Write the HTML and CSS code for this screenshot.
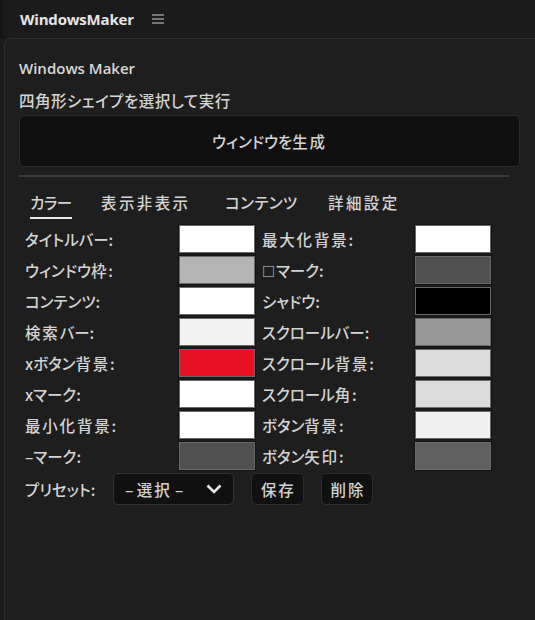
FILE: index.html
```html
<!DOCTYPE html>
<html lang="ja">
<head>
<meta charset="utf-8">
<link rel="stylesheet" href="styles.css">
</head>
<body>
<div class="topbar">
  <span class="app-title">WindowsMaker</span>
  <svg class="menu-icon" width="12" height="10" viewBox="0 0 12 10"><path d="M0 1H12M0 5H12M0 9H12" stroke="#cfcfcf" stroke-width="1.2"/></svg>
</div>
<div class="panel">
  <div class="heading">Windows Maker</div>
  <div class="subtitle">四角形シェイプを選択して実行</div>
  <button class="generate">ウィンドウを<span class="kj">生成</span></button>
  <div class="separator"></div>
  <div class="tabs">
    <span class="tab active">カラー</span>
    <span class="tab kj">表示非表示</span>
    <span class="tab">コンテンツ</span>
    <span class="tab kj">詳細設定</span>
  </div>
  <div class="grid">
    <span class="label">タイトルバー:</span><span class="swatch" style="background:#ffffff"></span>
    <span class="label right"><span class="kj">最大化背景</span>:</span><span class="swatch" style="background:#ffffff"></span>
    <span class="label">ウィンドウ<span class="kj">枠</span>:</span><span class="swatch" style="background:#b4b4b4"></span>
    <span class="label right"><span class="box-mark">□</span>マーク:</span><span class="swatch" style="background:#505050"></span>
    <span class="label">コンテンツ:</span><span class="swatch" style="background:#ffffff"></span>
    <span class="label right">シャドウ:</span><span class="swatch" style="background:#000000"></span>
    <span class="label"><span class="kj">検索</span>バー:</span><span class="swatch" style="background:#f2f2f2"></span>
    <span class="label right">スクロールバー:</span><span class="swatch" style="background:#999999"></span>
    <span class="label">xボタン<span class="kj">背景</span>:</span><span class="swatch" style="background:#e81123"></span>
    <span class="label right">スクロール<span class="kj">背景</span>:</span><span class="swatch" style="background:#dcdcdc"></span>
    <span class="label">xマーク:</span><span class="swatch" style="background:#ffffff"></span>
    <span class="label right">スクロール<span class="kj">角</span>:</span><span class="swatch" style="background:#dcdcdc"></span>
    <span class="label"><span class="kj">最小化背景</span>:</span><span class="swatch" style="background:#ffffff"></span>
    <span class="label right">ボタン<span class="kj">背景</span>:</span><span class="swatch" style="background:#f0f0f0"></span>
    <span class="label">–マーク:</span><span class="swatch" style="background:#505050"></span>
    <span class="label right">ボタン<span class="kj">矢印</span>:</span><span class="swatch" style="background:#606060"></span>
  </div>
  <div class="preset-row">
    <span class="label">プリセット:</span>
    <div class="select">
      <span>– <span class="kj">選択</span> –</span>
      <svg width="16" height="10" viewBox="0 0 16 10"><path d="M1.5 1.5L8 8L14.5 1.5" fill="none" stroke="#e6e6e6" stroke-width="2.6"/></svg>
    </div>
    <button class="small-btn kj">保存</button>
    <button class="small-btn kj">削除</button>
  </div>
</div>
</body>
</html>
```
FILE: styles.css
```css
html, body {
  margin: 0;
  padding: 0;
  height: 100%;
}
body {
  background: #1b1b1b;
  color: #d4d4d4;
  font-family: "Noto Sans CJK JP", "Noto Sans", sans-serif;
  font-size: 15px;
  font-weight: 500;
  font-feature-settings: "palt";
  overflow: hidden;
}
.kj {
  letter-spacing: 1.8px;
}
.topbar {
  height: 38px;
  display: flex;
  align-items: center;
  padding-left: 17px;
  gap: 18px;
  border-left: 3px solid #141414;
  box-sizing: border-box;
}
.app-title {
  font-family: "Open Sans", "Noto Sans", sans-serif;
  font-weight: 700;
  font-size: 15px;
  color: #e6e6e6;
  letter-spacing: -0.2px;
}
.menu-icon {
  display: block;
}
.panel {
  margin-left: 4px;
  background: #1e1e1e;
  border: 1px solid #2e2e2e;
  border-right: none;
  border-bottom: none;
  border-top-left-radius: 6px;
  padding: 17px 15px 0 14px;
  height: 600px;
  box-sizing: border-box;
}
.heading {
  font-family: "Open Sans", "Noto Sans", sans-serif;
  font-weight: 600;
  font-size: 15px;
  line-height: 24px;
  color: #d8d8d8;
}
.subtitle {
  margin-top: 8px;
  font-size: 15.5px;
  line-height: 24px;
  letter-spacing: 0.5px;
}
.generate {
  display: block;
  width: 100%;
  height: 52px;
  margin-top: 3px;
  background: #101010;
  border: 1px solid #2c2c2c;
  border-radius: 5px;
  color: #d4d4d4;
  font-family: inherit;
  font-weight: 500;
  font-size: 15.5px;
  font-feature-settings: "palt";
  letter-spacing: 0;
}
.separator {
  height: 2px;
  background: #3a3a3a;
  margin: 8px 11px 0 0;
}
.tabs {
  display: grid;
  grid-template-columns: 71px 124px 103px auto;
  padding-left: 11px;
  margin-top: 14px;
}
.tab {
  justify-self: start;
  font-size: 15.5px;
  line-height: 22px;
  padding-bottom: 4px;
  letter-spacing: 0.4px;
  border-bottom: 2px solid transparent;
}
.tab.kj {
  letter-spacing: 2.4px;
}
.tab.active {
  letter-spacing: -0.5px;
  border-bottom-color: #e8e8e8;
}
.grid {
  display: grid;
  grid-template-columns: 154px 76px 160px 76px;
  grid-auto-rows: 28px;
  row-gap: 3px;
  padding-left: 6px;
  margin-top: 6px;
}
.label {
  display: flex;
  align-items: center;
  font-size: 15.5px;
  letter-spacing: 0;
  white-space: nowrap;
}
.label.right {
  padding-left: 7px;
}
.box-mark {
  font-size: 13px;
  margin-right: 1px;
}
.swatch {
  display: block;
  border: 1px solid #6a6a6a;
  box-shadow: 0 0 0 1px #141414;
  box-sizing: border-box;
}
.preset-row {
  display: flex;
  align-items: center;
  height: 31px;
  margin-top: 3px;
  padding-left: 6px;
}
.preset-row .label {
  width: 88px;
}
.select {
  width: 121px;
  height: 32px;
  box-sizing: border-box;
  background: #111111;
  border: 1px solid #333333;
  border-radius: 5px;
  display: flex;
  align-items: center;
  justify-content: space-between;
  padding: 0 11px 0 11px;
  font-size: 15.5px;
}
.select svg {
  display: block;
}
.small-btn {
  height: 32px;
  margin-left: 17px;
  padding: 0 7px 0 9px;
  background: #111111;
  border: 1px solid #2e2e2e;
  border-radius: 5px;
  color: #d4d4d4;
  font-family: inherit;
  font-weight: 500;
  font-size: 15.5px;
}
```
